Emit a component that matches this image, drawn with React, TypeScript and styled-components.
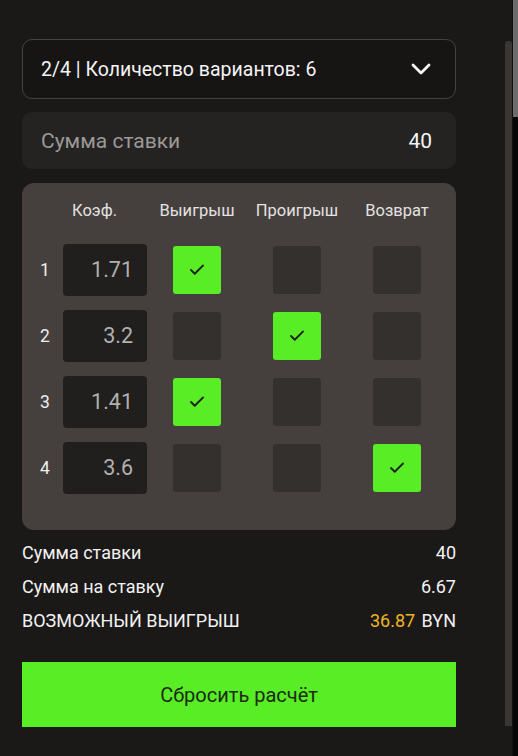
import styled, { createGlobalStyle } from "styled-components";
import { Check } from "lucide-react";

const GlobalStyle = createGlobalStyle`
  html, body {
    margin: 0;
    padding: 0;
    background: #1b1918;
  }
  body {
    font-family: Roboto, "Noto Sans", "Liberation Sans", sans-serif;
    color: #f2f2f2;
  }
`;

type Outcome = "win" | "lose" | "refund";

const rows: { coef: string; outcome: Outcome }[] = [
  { coef: "1.71", outcome: "win" },
  { coef: "3.2", outcome: "lose" },
  { coef: "1.41", outcome: "win" },
  { coef: "3.6", outcome: "refund" },
];

const outcomes: Outcome[] = ["win", "lose", "refund"];

const App = () => {
  return (
    <>
      <GlobalStyle />
      <Screen>
        <Panel>
          <Select>
            <span>2/4 | Количество вариантов: 6</span>
            <svg width="20" height="12" viewBox="0 0 20 12" fill="none">
              <polyline
                points="2,2 10,10 18,2"
                stroke="#f4f4f4"
                strokeWidth="2.8"
                strokeLinecap="round"
                strokeLinejoin="round"
              />
            </svg>
          </Select>

          <StakeField>
            <StakeLabel>Сумма ставки</StakeLabel>
            <StakeValue>40</StakeValue>
          </StakeField>

          <Card>
            <GridRow>
              <span />
              <HeadCell $left>Коэф.</HeadCell>
              <HeadCell>Выигрыш</HeadCell>
              <HeadCell>Проигрыш</HeadCell>
              <HeadCell>Возврат</HeadCell>
            </GridRow>
            <Rows>
              {rows.map((row, i) => (
                <GridRow key={i}>
                  <RowNum>{i + 1}</RowNum>
                  <CoefBox>{row.coef}</CoefBox>
                  {outcomes.map((o) => (
                    <Cell key={o}>
                      <Box $checked={row.outcome === o}>
                        {row.outcome === o && <Check size={18} strokeWidth={2.4} color="#1b1f16" />}
                      </Box>
                    </Cell>
                  ))}
                </GridRow>
              ))}
            </Rows>
          </Card>

          <Summary>
            <SumRow>
              <span>Сумма ставки</span>
              <span>40</span>
            </SumRow>
            <SumRow>
              <span>Сумма на ставку</span>
              <span>6.67</span>
            </SumRow>
            <SumRow>
              <span>ВОЗМОЖНЫЙ ВЫИГРЫШ</span>
              <span>
                <Gold>36.87</Gold> BYN
              </span>
            </SumRow>
          </Summary>

          <ResetButton>Сбросить расчёт</ResetButton>

          <InnerThumb />
        </Panel>
        <OuterTrack>
          <OuterThumb />
        </OuterTrack>
      </Screen>
    </>
  );
};

export default App;

// layout
const Screen = styled.div`
  display: flex;
  height: 756px;
  overflow: hidden;
`;

const Panel = styled.div`
  position: relative;
  flex: 1;
  display: flex;
  flex-direction: column;
  padding: 39px 56px 0 22px;
  background: #1b1918;
`;

const OuterTrack = styled.div`
  width: 5px;
  background: #070707;
  border-left: 1px solid #111;
`;

const OuterThumb = styled.div`
  height: 117px;
  background: #6c6c6c;
`;

const InnerThumb = styled.div`
  position: absolute;
  top: 41px;
  right: 0;
  width: 7px;
  height: 685px;
  background: #3a3634;
  border-radius: 3px 3px 0 0;
`;

// top controls
const Select = styled.div`
  display: flex;
  align-items: center;
  justify-content: space-between;
  height: 58px;
  padding: 0 24px 0 18px;
  border: 1px solid #464240;
  border-radius: 10px;
  background: #171514;
  font-size: 19.5px;
  color: #f4f4f4;
`;

const StakeField = styled.div`
  display: flex;
  align-items: center;
  justify-content: space-between;
  height: 57px;
  margin-top: 13px;
  padding: 0 24px 0 19px;
  border-radius: 10px;
  background: #252322;
  font-size: 21px;
`;

const StakeLabel = styled.span`
  color: #9c9896;
`;

const StakeValue = styled.span`
  color: #f4f4f4;
`;

// table
const Card = styled.div`
  display: flex;
  flex-direction: column;
  gap: 23px;
  margin-top: 14px;
  padding: 18px 9px 36px 5px;
  border-radius: 12px;
  background: #45403e;
`;

const GridRow = styled.div`
  display: grid;
  grid-template-columns: 36px 84px repeat(3, 100px);
  align-items: center;
`;

const Rows = styled.div`
  display: flex;
  flex-direction: column;
  gap: 14px;
`;

const HeadCell = styled.span<{ $left?: boolean }>`
  height: 20px;
  line-height: 20px;
  font-size: 16.5px;
  color: #e4e2e0;
  text-align: ${(p) => (p.$left ? "left" : "center")};
  padding-left: ${(p) => (p.$left ? "9px" : "0")};
  white-space: nowrap;
`;

const RowNum = styled.span`
  font-size: 17.5px;
  color: #eeeeee;
  text-align: center;
`;

const CoefBox = styled.div`
  height: 52px;
  line-height: 52px;
  padding-right: 14px;
  border-radius: 4px;
  background: #211f1e;
  color: #b3b0ae;
  font-size: 21.5px;
  text-align: right;
`;

const Cell = styled.div`
  display: flex;
  justify-content: center;
`;

const Box = styled.div<{ $checked: boolean }>`
  display: flex;
  align-items: center;
  justify-content: center;
  width: 48px;
  height: 48px;
  border-radius: 3px;
  background: ${(p) => (p.$checked ? "#58ed24" : "#33302e")};
`;

// totals
const Summary = styled.div`
  display: flex;
  flex-direction: column;
  margin-top: 5px;
`;

const SumRow = styled.div`
  display: flex;
  justify-content: space-between;
  align-items: center;
  height: 34px;
  font-size: 18px;
  color: #f2f2f2;
`;

const Gold = styled.span`
  color: #efb426;
  margin-right: 2px;
`;

const ResetButton = styled.button`
  height: 65px;
  margin-top: 25px;
  border: none;
  background: #58ed24;
  color: #1d2a14;
  font-family: inherit;
  font-size: 20px;
  cursor: pointer;
`;
